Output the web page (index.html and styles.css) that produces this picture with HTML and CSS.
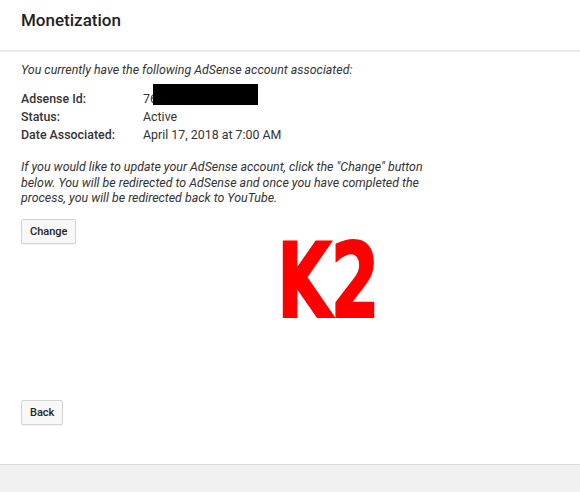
FILE: index.html
```html
<!DOCTYPE html>
<html>
<head>
<meta charset="utf-8">
<link rel="stylesheet" href="styles.css">
</head>
<body>
<div class="page">
  <header class="header">
    <h1 class="title">Monetization</h1>
  </header>
  <main class="content">
    <p class="intro">You currently have the following AdSense account associated:</p>
    <div class="details">
      <div class="label">Adsense Id:</div>
      <div class="value"><span class="id">76</span><span class="redact"></span></div>
      <div class="label">Status:</div>
      <div class="value">Active</div>
      <div class="label">Date Associated:</div>
      <div class="value">April 17, 2018 at 7:00 AM</div>
    </div>
    <p class="note">If you would like to update your AdSense account, click the "Change" button below. You will be redirected to AdSense and once you have completed the process, you will be redirected back to YouTube.</p>
    <button class="btn">Change</button>
    <div class="spacer"></div>
    <button class="btn">Back</button>
    <div class="watermark">K2</div>
  </main>
  <footer class="footer"></footer>
</div>
</body>
</html>
```

FILE: styles.css
```css
html, body {
  margin: 0;
  padding: 0;
  background: #fff;
}
body {
  font-family: Roboto, "Liberation Sans", Arial, sans-serif;
  color: #333;
  font-size: 12.4px;
}
.page {
  display: flex;
  flex-direction: column;
  height: 492px;
}
.header {
  border-bottom: 2px solid #e8e8e8;
  padding: 0 21px;
  box-sizing: border-box;
  height: 52px;
}
.title {
  margin: 0;
  padding-top: 9px;
  font-size: 17px;
  font-weight: 500;
  color: #222;
  line-height: 22px;
}
.content {
  position: relative;
  flex: 1;
  padding: 10px 21px 0;
  display: flex;
  flex-direction: column;
  align-items: flex-start;
}
.intro {
  margin: 0;
  font-style: italic;
  line-height: 16px;
  color: #333;
}
.details {
  display: grid;
  grid-template-columns: 122px auto;
  row-gap: 2px;
  margin-top: 13px;
  line-height: 16px;
}
.label {
  font-weight: 500;
  color: #333;
}
.value {
  position: relative;
}
.redact {
  position: absolute;
  left: 10px;
  top: -7px;
  width: 105px;
  height: 21px;
  background: #000;
}
.note {
  margin: 16px 0 0;
  width: 430px;
  font-style: italic;
  line-height: 15.5px;
}
.btn {
  margin-top: 13px;
  font-family: Roboto, "Liberation Sans", Arial, sans-serif;
  font-size: 11px;
  font-weight: 500;
  color: #222;
  background: #f8f8f8;
  border: 1px solid #d3d3d3;
  border-radius: 2px;
  box-shadow: 0 1px 0 rgba(0,0,0,0.05);
  height: 25px;
  padding: 0 8px;
}
.spacer {
  height: 143px;
}
.watermark {
  position: absolute;
  left: 277px;
  top: 177px;
  font-family: "DejaVu Sans", sans-serif;
  font-weight: bold;
  font-size: 104px;
  line-height: 1;
  color: #ff0000;
  letter-spacing: -2px;
  transform: scaleX(0.68);
  transform-origin: left top;
  -webkit-text-stroke: 2px #ff0000;
}
.footer {
  height: 27px;
  background: #f1f1f1;
  border-top: 1px solid #dcdcdc;
}
```
